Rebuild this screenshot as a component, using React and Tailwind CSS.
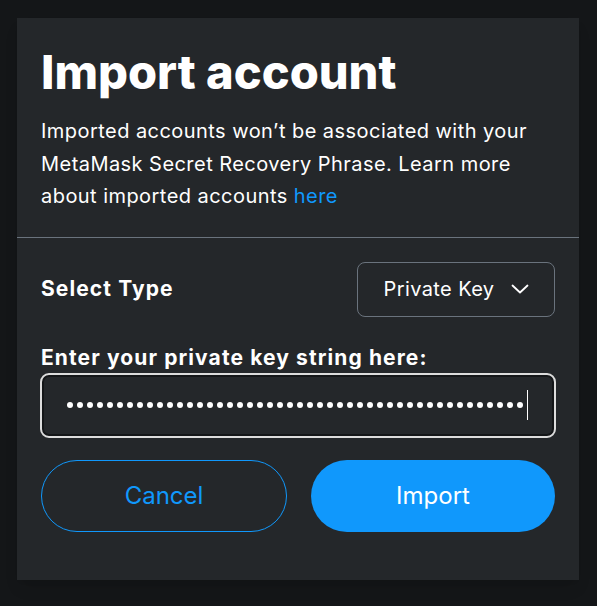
import React from 'react';

const ChevronDown = () => (
  <svg width="18" height="12" viewBox="0 0 18 12" fill="none">
    <path d="M1.5 2.5 L9 9.5 L16.5 2.5" stroke="white" strokeWidth="1.8" strokeLinecap="round" strokeLinejoin="round" />
  </svg>
);

const App = () => {
  const dots = Array.from({ length: 46 });

  return (
    <div className="min-h-screen bg-[#141618] pt-[18px] pl-[17px]" style={{ fontFamily: 'Inter, "Noto Sans", sans-serif' }}>
      <div className="w-[562px] h-[562px] bg-[#24272a] text-white shadow-lg">
        {/* Header */}
        <div className="px-6 pt-[25px] pb-[24px] border-b border-[#6a737d]">
          <h1 className="text-[47px] leading-[58px] font-extrabold">Import account</h1>
          <p className="mt-[14px] text-[20px] leading-[32.5px] tracking-[0.45px]">
            Imported accounts won’t be associated with your MetaMask Secret Recovery Phrase. Learn more about imported accounts
            <a href="#" className="ml-[6px] text-[#1098fc]">here</a>
          </p>
        </div>

        {/* Body */}
        <div className="px-6 pt-6">
          <div className="flex items-center justify-between">
            <span className="text-[21px] font-bold tracking-[1.1px]">Select Type</span>
            <button className="w-[198px] h-[55px] flex items-center justify-center gap-4 rounded-lg border border-[#6a737d] text-[20px] tracking-[0.4px]">
              <span>Private Key</span>
              <ChevronDown />
            </button>
          </div>

          <label className="block mt-[27px] text-[21px] font-bold leading-[28px] tracking-[1.1px]">Enter your private key string here:</label>
          <div className="mt-[1px] -mx-[1px] h-[65px] rounded-[9px] border-2 border-[#dcdcdc] bg-[#24272a] shadow-[inset_0_0_0_2px_#141618] flex items-center pl-[25px] pr-[20px]">
            <div className="flex items-center gap-[4px]">
              {dots.map((_, i) => (
                <span key={i} className="shrink-0 w-[6px] h-[6px] rounded-full bg-white" />
              ))}
            </div>
            <span className="shrink-0 ml-[4px] w-[1px] h-[30px] bg-white" />
          </div>

          <div className="mt-[22px] flex gap-6">
            <button className="flex-1 h-[72px] rounded-full border border-[#1098fc] text-[#1098fc] text-[24px]">Cancel</button>
            <button className="flex-1 h-[72px] rounded-full bg-[#1098fc] text-white text-[24px]">Import</button>
          </div>
        </div>
      </div>
    </div>
  );
};

export default App;
